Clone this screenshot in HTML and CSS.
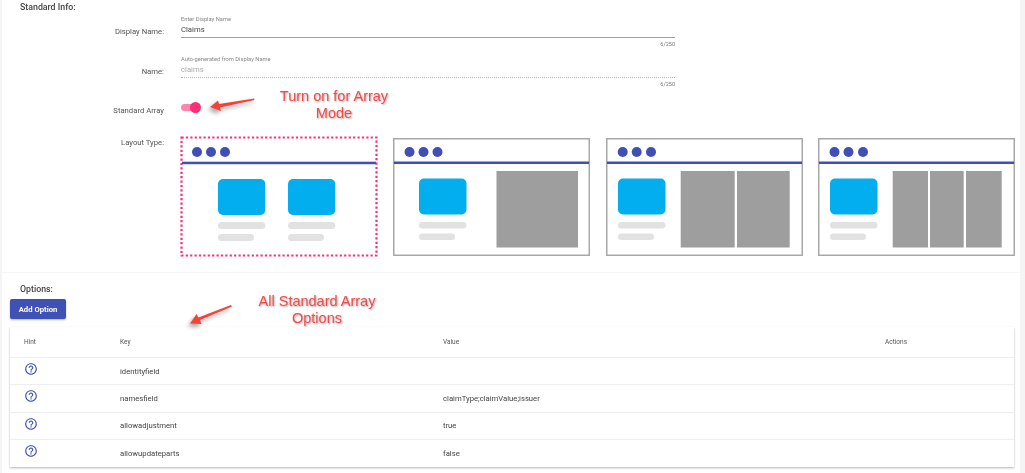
FILE: index.html
```html
<!DOCTYPE html>
<html lang="en">
<head>
    <meta charset="UTF-8">
    <meta name="viewport" content="width=device-width, initial-scale=1.0">
    <title>Standard Array</title>
    <link rel="stylesheet" href="styles.css">
</head>
<body>
    <main class="page">
        <h2 class="section-title">Standard Info:</h2>

        <div class="form-row field-first">
            <label class="row-label field-label">Display Name:</label>
            <div class="field">
                <div class="field-hint">Enter Display Name</div>
                <div class="field-value">Claims</div>
                <div class="field-count">6/250</div>
            </div>
        </div>

        <div class="form-row field-next">
            <label class="row-label field-label">Name:</label>
            <div class="field field-disabled">
                <div class="field-hint">Auto-generated from Display Name</div>
                <div class="field-value">claims</div>
                <div class="field-count">6/250</div>
            </div>
        </div>

        <div class="form-row toggle-row">
            <label class="row-label">Standard Array</label>
            <div class="toggle"><span class="toggle-knob"></span></div>
        </div>

        <div class="form-row layout-row">
            <label class="row-label">Layout Type:</label>
            <div class="thumbs">
                <svg class="thumb" width="198" height="121" viewBox="0 0 198 121">
                    <rect class="thumb-selected" x="1.5" y="1.5" width="195" height="118"/>
                    <circle class="ink" cx="17" cy="16" r="5"/><circle class="ink" cx="31" cy="16" r="5"/><circle class="ink" cx="45" cy="16" r="5"/>
                    <rect class="ink" x="2" y="25.7" width="194" height="2.5"/>
                    <rect class="tile" x="38" y="43" width="47.3" height="36" rx="5"/>
                    <rect class="tile" x="108" y="43" width="47.3" height="36" rx="5"/>
                    <rect class="bar" x="38" y="86" width="47.3" height="7" rx="3.5"/>
                    <rect class="bar" x="38" y="98" width="36" height="7" rx="3.5"/>
                    <rect class="bar" x="108" y="86" width="47.3" height="7" rx="3.5"/>
                    <rect class="bar" x="108" y="98" width="36" height="7" rx="3.5"/>
                </svg>
                <svg class="thumb" width="197" height="118" viewBox="0 0 197 118">
                    <rect class="thumb-frame" x="0.75" y="0.75" width="195.5" height="116.5"/>
                    <circle class="ink" cx="16.5" cy="14" r="5"/><circle class="ink" cx="30.5" cy="14" r="5"/><circle class="ink" cx="44.5" cy="14" r="5"/>
                    <rect class="ink" x="1" y="23.5" width="195" height="2.5"/>
                    <rect class="tile" x="26" y="40.5" width="47.5" height="36" rx="5"/>
                    <rect class="bar" x="26" y="84" width="47.5" height="6.5" rx="3.25"/>
                    <rect class="bar" x="26" y="95.5" width="36" height="6.5" rx="3.25"/>
                    <rect class="block" x="103.5" y="33" width="81.5" height="76.5"/>
                </svg>
                <svg class="thumb" width="197" height="118" viewBox="0 0 197 118">
                    <rect class="thumb-frame" x="0.75" y="0.75" width="195.5" height="116.5"/>
                    <circle class="ink" cx="16.7" cy="14" r="5"/><circle class="ink" cx="30.7" cy="14" r="5"/><circle class="ink" cx="45" cy="14" r="5"/>
                    <rect class="ink" x="1" y="23.5" width="195" height="2.5"/>
                    <rect class="tile" x="12" y="40.5" width="47.5" height="36" rx="5"/>
                    <rect class="bar" x="12" y="84" width="47.5" height="6.5" rx="3.25"/>
                    <rect class="bar" x="12" y="95.5" width="36" height="6.5" rx="3.25"/>
                    <rect class="block" x="74.7" y="33" width="54" height="76.5"/>
                    <rect class="block" x="131" y="33" width="52.7" height="76.5"/>
                </svg>
                <svg class="thumb" width="197" height="118" viewBox="0 0 197 118">
                    <rect class="thumb-frame" x="0.75" y="0.75" width="195.5" height="116.5"/>
                    <circle class="ink" cx="16.5" cy="14" r="5"/><circle class="ink" cx="30.5" cy="14" r="5"/><circle class="ink" cx="45" cy="14" r="5"/>
                    <rect class="ink" x="1" y="23.5" width="195" height="2.5"/>
                    <rect class="tile" x="12" y="40.5" width="47.5" height="36" rx="5"/>
                    <rect class="bar" x="12" y="84" width="47.5" height="6.5" rx="3.25"/>
                    <rect class="bar" x="12" y="95.5" width="36" height="6.5" rx="3.25"/>
                    <rect class="block" x="74.7" y="33" width="35.3" height="76.5"/>
                    <rect class="block" x="112" y="33" width="33.7" height="76.5"/>
                    <rect class="block" x="148" y="33" width="35.7" height="76.5"/>
                </svg>
            </div>
        </div>

        <hr class="divider">

        <h2 class="section-title">Options:</h2>
        <button class="add-button" type="button">Add Option</button>

        <table class="options">
            <thead>
                <tr>
                    <th class="col-hint">Hint</th>
                    <th class="col-key">Key</th>
                    <th class="col-value">Value</th>
                    <th class="col-actions">Actions</th>
                </tr>
            </thead>
            <tbody>
                <tr>
                    <td><svg class="help" viewBox="0 0 24 24"><path d="M11 18h2v-2h-2v2zm1-16C6.48 2 2 6.48 2 12s4.48 10 10 10 10-4.48 10-10S17.52 2 12 2zm0 18c-4.41 0-8-3.59-8-8s3.59-8 8-8 8 3.59 8 8-3.59 8-8 8zm0-14c-2.21 0-4 1.79-4 4h2c0-1.1.9-2 2-2s2 .9 2 2c0 2-3 1.75-3 5h2c0-2.25 3-2.5 3-5 0-2.21-1.79-4-4-4z"/></svg></td>
                    <td>identityfield</td>
                    <td></td>
                    <td></td>
                </tr>
                <tr>
                    <td><svg class="help" viewBox="0 0 24 24"><path d="M11 18h2v-2h-2v2zm1-16C6.48 2 2 6.48 2 12s4.48 10 10 10 10-4.48 10-10S17.52 2 12 2zm0 18c-4.41 0-8-3.59-8-8s3.59-8 8-8 8 3.59 8 8-3.59 8-8 8zm0-14c-2.21 0-4 1.79-4 4h2c0-1.1.9-2 2-2s2 .9 2 2c0 2-3 1.75-3 5h2c0-2.25 3-2.5 3-5 0-2.21-1.79-4-4-4z"/></svg></td>
                    <td>namesfield</td>
                    <td>claimType;claimValue;issuer</td>
                    <td></td>
                </tr>
                <tr>
                    <td><svg class="help" viewBox="0 0 24 24"><path d="M11 18h2v-2h-2v2zm1-16C6.48 2 2 6.48 2 12s4.48 10 10 10 10-4.48 10-10S17.52 2 12 2zm0 18c-4.41 0-8-3.59-8-8s3.59-8 8-8 8 3.59 8 8-3.59 8-8 8zm0-14c-2.21 0-4 1.79-4 4h2c0-1.1.9-2 2-2s2 .9 2 2c0 2-3 1.75-3 5h2c0-2.25 3-2.5 3-5 0-2.21-1.79-4-4-4z"/></svg></td>
                    <td>allowadjustment</td>
                    <td>true</td>
                    <td></td>
                </tr>
                <tr>
                    <td><svg class="help" viewBox="0 0 24 24"><path d="M11 18h2v-2h-2v2zm1-16C6.48 2 2 6.48 2 12s4.48 10 10 10 10-4.48 10-10S17.52 2 12 2zm0 18c-4.41 0-8-3.59-8-8s3.59-8 8-8 8 3.59 8 8-3.59 8-8 8zm0-14c-2.21 0-4 1.79-4 4h2c0-1.1.9-2 2-2s2 .9 2 2c0 2-3 1.75-3 5h2c0-2.25 3-2.5 3-5 0-2.21-1.79-4-4-4z"/></svg></td>
                    <td>allowupdateparts</td>
                    <td>false</td>
                    <td></td>
                </tr>
            </tbody>
        </table>

        <!-- Red notes drawn over the screenshot -->
        <svg class="arrow arrow-toggle" width="50" height="16" viewBox="0 0 50 16">
            <path d="M47 1.5 L47.5 3 L13 10.5 L14 14 L3 10 L11 3.5 L12 7 Z"/>
        </svg>
        <div class="note note-toggle">Turn on for Array<br>Mode</div>

        <svg class="arrow arrow-options" width="48" height="24" viewBox="0 0 48 24">
            <path d="M44 1 L45 2.5 L13 16 L14.5 20 L3 19.5 L9.5 10 L11.5 13.5 Z"/>
        </svg>
        <div class="note note-options">All Standard Array<br>Options</div>
    </main>
</body>
</html>
```

FILE: styles.css
```css
* {
    margin: 0;
    padding: 0;
    box-sizing: border-box;
}

body {
    font-family: Roboto, Arial, sans-serif;
    background-color: #f5f5f5;
    color: #555;
}

/* White sheet between the grey page edges, a little soft like a scaled capture */
.page {
    position: relative;
    height: 473px;
    margin: 0 5px 0 2px;
    background-color: #fff;
    overflow: hidden;
    filter: blur(0.3px);
}

.section-title {
    padding-left: 18px;
    font-size: 8.8px;
    font-weight: 500;
    line-height: 14px;
    color: #444;
}

/* Label column + content column */
.form-row {
    display: grid;
    grid-template-columns: 162px 1fr;
    column-gap: 17px;
}

.row-label {
    font-size: 7.7px;
    line-height: 14px;
    text-align: right;
    color: #555;
}

.field-label {
    padding-top: 10px;
}

.field-first {
    margin-top: 1px;
}

.field-next {
    margin-top: 7px;
}

.field {
    width: 494px;
}

.field-hint {
    font-size: 5.75px;
    line-height: 8px;
    color: #888;
}

.field-value {
    height: 15px;
    font-size: 7.7px;
    line-height: 14px;
    color: #444;
    border-bottom: 1px solid #9e9e9e;
}

.field-disabled .field-value {
    color: #aaa;
    border-bottom: 1px dotted #bbb;
}

.field-count {
    margin-top: 2px;
    font-size: 5.5px;
    line-height: 8px;
    text-align: right;
    color: #777;
}

.toggle-row {
    margin-top: 15px;
}

.toggle-row .row-label {
    padding-top: 1px;
}

/* Switch */
.toggle {
    position: relative;
    width: 16px;
    height: 7px;
    margin-top: 1px;
    background-color: #ff85ad;
    border-radius: 4px;
}

.toggle-knob {
    position: absolute;
    left: 9px;
    top: -2px;
    width: 11px;
    height: 11px;
    background-color: #ff2d78;
    border-radius: 50%;
}

.layout-row {
    margin-top: 18px;
}

.thumbs {
    display: flex;
    align-items: center;
    gap: 15.3px;
    margin-left: -1px;
}

.thumb {
    display: block;
    flex: none;
}

.thumb-selected {
    fill: none;
    stroke: #ff2d78;
    stroke-width: 2.2;
    stroke-dasharray: 2.2 2.2;
}

.thumb-frame {
    fill: #fff;
    stroke: #a8a8a8;
    stroke-width: 1.5;
}

.ink {
    fill: #3f4fb5;
}

.tile {
    fill: #03aeef;
}

.bar {
    fill: #e2e2e2;
}

.block {
    fill: #9e9e9e;
}

.divider {
    margin-top: 15px;
    border: none;
    border-top: 1px solid #f6f6f6;
}

.divider + .section-title {
    margin-top: 9px;
}

.add-button {
    display: block;
    width: 56px;
    height: 20px;
    margin: 3px 0 0 8px;
    font-family: Roboto, Arial, sans-serif;
    font-size: 7.7px;
    font-weight: 700;
    color: #fff;
    background-color: #3f51b5;
    border: none;
    border-radius: 2px;
    box-shadow: 0 1px 2px rgba(0,0,0,0.3);
}

/* Options table */
.options {
    width: 1004px;
    margin: 8px 0 0 8px;
    table-layout: fixed;
    border-collapse: collapse;
    box-shadow: 0 1px 2px rgba(0,0,0,0.3);
}

.options th,
.options td {
    padding-left: 14px;
    text-align: left;
}

.options th {
    height: 30.5px;
    font-size: 6.5px;
    font-weight: 400;
    color: #555;
    border-bottom: 1px solid #eee;
}

.options td {
    height: 27.25px;
    font-size: 7.7px;
    color: #444;
    border-bottom: 1px solid #eee;
}

.options tr:last-child td {
    border-bottom: none;
}

.col-hint {
    width: 96px;
}

.col-key {
    width: 323px;
}

.col-value {
    width: 442px;
}

.help {
    display: block;
    width: 14px;
    height: 14px;
    margin: -4px 0 0 -0.5px;
    fill: #3f51b5;
}

/* Annotations */
.arrow {
    position: absolute;
    filter: drop-shadow(-2px 3px 2px rgba(0,0,0,0.35));
}

.arrow path {
    fill: #f44336;
}

.arrow-toggle {
    left: 205px;
    top: 97px;
}

.arrow-options {
    left: 185px;
    top: 304px;
}

.note {
    position: absolute;
    font-family: "Liberation Sans", Arial, sans-serif;
    font-size: 14.5px;
    line-height: 17px;
    text-align: center;
    color: #f44a4a;
    text-shadow: 1px 1px 2px rgba(0,0,0,0.35);
}

.note-toggle {
    left: 270px;
    top: 88px;
    width: 124px;
}

.note-options {
    left: 250px;
    top: 293px;
    width: 130px;
}
```
